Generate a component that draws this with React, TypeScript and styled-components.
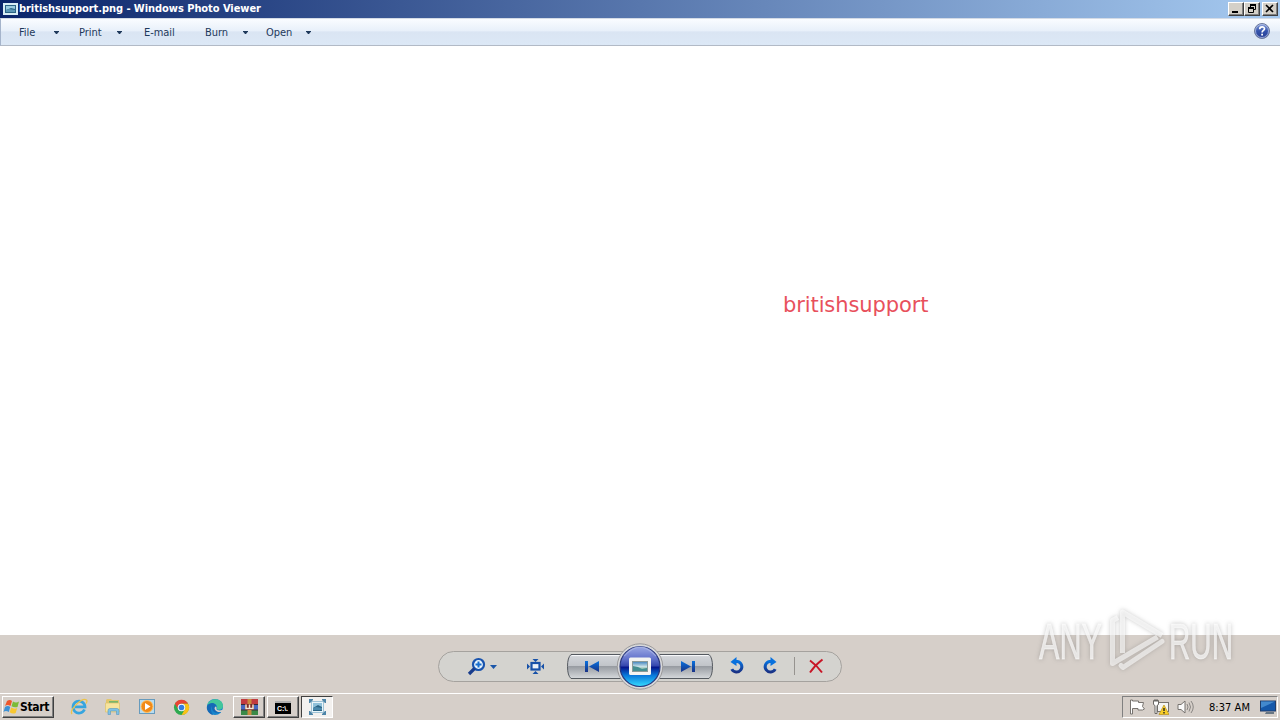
import * as React from 'react';
import styled, { createGlobalStyle, css } from 'styled-components';

const GlobalStyle = createGlobalStyle`
  * {
    box-sizing: border-box;
  }

  body {
    margin: 0;
    overflow: hidden;
    font-family: 'DejaVu Sans Condensed', 'DejaVu Sans', sans-serif;
    font-size: 11px;
    font-stretch: condensed;
  }

  svg {
    display: block;
    flex-shrink: 0;
  }
`
const Desktop = styled.div`
  position: relative;
  width: 1280px;
  height: 720px;
  display: flex;
  flex-direction: column;
  overflow: hidden;
  background: #d6cfc9;
`
const TitleBar = styled.header`
  height: 18px;
  display: flex;
  align-items: center;
  padding: 0 2px 0 3px;
  background: linear-gradient(90deg, #0a246a, #a6caf0);
`
const Title = styled.h1`
  flex: 1;
  margin: 0 0 0 1px;
  color: #fff;
  font-size: 11px;
  line-height: 18px;
  letter-spacing: -0.05px;
  white-space: nowrap;
`
const CaptionButton = styled.button<{ $gap?: boolean }>`
  width: 16px;
  height: 14px;
  margin: 0 0 0 ${props => (props.$gap ? '2px' : '0')};
  padding: 0;
  border: 1px solid;
  border-color: #fff #404040 #404040 #fff;
  box-shadow: inset -1px -1px #808080;
  background: #d4d0c8;
`
const MenuBar = styled.nav`
  height: 28px;
  display: flex;
  align-items: center;
  padding: 0 10px 0 18px;
  border-left: 1px solid #a5b4cb;
  border-top: 1px solid #d4dbe6;
  border-bottom: 1px solid #b2bac6;
  background: linear-gradient(#fafcff, #e8f0fa 45%, #dae5f3 50%, #dce8f6);
`
const MenuItem = styled.div<{ $width: number }>`
  width: ${props => props.$width}px;
  padding-top: 2px;
  color: #1e395b;
  line-height: 14px;
  letter-spacing: -0.05px;
`
const Arrow = styled.i<{ $after: number }>`
  width: 5px;
  height: 3px;
  margin: 1px ${props => props.$after}px 0 0;
  background: #1e395b;
  clip-path: polygon(0 0, 100% 0, 100% 20%, 60% 100%, 40% 100%, 0 20%);
`
const HelpButton = styled.div`
  padding-bottom: 2px;
`
const Spacer = styled.div`
  flex: 1;
`
const Canvas = styled.main`
  height: 589px;
  padding: 245px 0 0 783px;
  background: #fff;
`
const Caption = styled.div`
  color: #e8505c;
  font-family: 'DejaVu Sans', sans-serif;
  font-size: 21px;
  font-stretch: normal;
  line-height: 28px;
  letter-spacing: -0.1px;
`
const ControlBand = styled.section`
  height: 58px;
  display: flex;
  justify-content: center;
  padding-top: 6px;
`
const Taskbar = styled.footer`
  height: 27px;
  display: flex;
  align-items: flex-start;
  padding: 2px 2px 0;
  border-top: 1px solid #fff;
`
const raised = css`
  border: 1px solid;
  border-color: #fff #404040 #404040 #fff;
  box-shadow: inset -1px -1px #808080;
`
const StartButton = styled.button`
  ${raised}
  width: 52px;
  height: 22px;
  display: flex;
  align-items: center;
  margin: 0 9px 0 0;
  padding: 0;
  background: #d6cfc9;
  color: #000;
  font: bold 12px 'DejaVu Sans Condensed', 'DejaVu Sans', sans-serif;
  letter-spacing: -0.3px;
`
const TaskButton = styled.div<{ $look?: 'raised' | 'active' }>`
  width: 32px;
  height: 22px;
  display: flex;
  align-items: center;
  justify-content: center;
  margin-right: 2px;
  ${props => props.$look === 'raised' && raised}
  ${props => props.$look === 'active' && css`
    border: 1px solid;
    border-color: #404040 #fff #fff #404040;
    background: #f3f1ef;
  `}
`
const Tray = styled.div`
  height: 22px;
  width: 156px;
  display: flex;
  align-items: center;
  gap: 8px;
  padding-left: 6px;
  border: 1px solid;
  border-color: #808080 #fff #fff #808080;
`
const Clock = styled.time`
  width: 42px;
  margin: 0 1px 0 7px;
  color: #000;
  letter-spacing: 0.05px;
  white-space: nowrap;
`
const Watermark = styled.svg`
  position: absolute;
  left: 1026px;
  top: 598px;
  overflow: visible;
  filter: drop-shadow(0 0 2px rgba(90, 90, 90, 0.5));
`

const PhotoIcon = () => (
  <svg width="15" height="14" viewBox="0 0 15 14">
    <path d="M0 1h15v12H0z" fill="#d8edf5" />
    <rect x="2" y="3" width="11" height="8" fill="#2b6485" />
    <path d="M3 4h9v3L8 6 3 8z" fill="#9bcbe0" />
    <path d="M3 10V8l3-1 6 1v2z" fill="#5d98b7" />
  </svg>
)

const ViewerTaskIcon = () => (
  <svg width="17" height="16" viewBox="0 0 17 16">
    <path d="M2.500 2.500h12v11h-12z" fill="#e9f5fa" stroke="#9fc3d6" />
    <path d="M0 0h4v1L1 4H0zM17 0h-4v1l3 3h1zM0 16h4v-1l-3-3H0zM17 16h-4v-1l3-3h1z" fill="#4d85a8" />
    <rect x="4" y="4" width="9" height="8" fill="#2b6485" />
    <path d="M4 4h9v4L9 6 4 9z" fill="#8fc1da" />
    <path d="M4 11V9l3-1 6 1v2z" fill="#4b89ac" />
  </svg>
)

const HelpIcon = () => (
  <svg width="16" height="16" viewBox="0 0 16 16">
    <defs>
      <linearGradient id="help" x2="0" y2="1">
        <stop stopColor="#8ea4dd" />
        <stop offset=".5" stopColor="#3453ac" />
        <stop offset="1" stopColor="#263c91" />
      </linearGradient>
    </defs>
    <circle cx="8" cy="8" r="7.5" fill="url(#help)" stroke="#6e7a9b" />
    <circle cx="8" cy="8" r="6.5" fill="none" stroke="#b3c2e8" strokeWidth=".8" />
    <path d="M5.7 6.2c0-3.2 4.8-3 4.8-.4C10.500 7.500 8.100 7.400 8.100 9.500" fill="none" stroke="#fff" strokeWidth="1.700" />
    <rect x="7.200" y="10.700" width="1.800" height="1.800" fill="#fff" />
  </svg>
)

const PlayerControls = () => (
  <svg width="406" height="50" viewBox="437 641 406 50">
    <defs>
      <linearGradient id="steel" x2="0" y2="1">
        <stop stopColor="#e7e9ec" />
        <stop offset=".1" stopColor="#d0d3d7" />
        <stop offset=".47" stopColor="#c1c4c9" />
        <stop offset=".5" stopColor="#989ca2" />
        <stop offset="1" stopColor="#d6d9dc" />
      </linearGradient>
      <linearGradient id="orb" x2="0" y2="1">
        <stop stopColor="#9ca9e4" />
        <stop offset=".3" stopColor="#6474cc" />
        <stop offset=".48" stopColor="#3547ae" />
        <stop offset=".52" stopColor="#06168c" />
        <stop offset=".72" stopColor="#0878db" />
        <stop offset="1" stopColor="#35ddff" />
      </linearGradient>
      <linearGradient id="glyph" x2="0" y2="1">
        <stop stopColor="#0871de" />
        <stop offset="1" stopColor="#193286" />
      </linearGradient>
      <linearGradient id="view" x2="0" y2="1">
        <stop stopColor="#3e81bd" />
        <stop offset=".5" stopColor="#c8e1e7" />
        <stop offset="1" stopColor="#5a9b65" />
      </linearGradient>
    </defs>
    <rect x="438.500" y="651.500" width="403" height="30" rx="15" fill="#d4d3cf" stroke="#a5a29e" />
    <path d="M571 654.500h50v24h-50q-3.500-3-3.500-12t3.500-12zM709 654.500h-50v24h50q3.500-3 3.500-12t-3.500-12z" fill="url(#steel)" stroke="#555a60" />
    <path d="M572 655.500h48M660 655.500h48" stroke="#f7f8fa" />
    <circle cx="640" cy="666.500" r="22.700" fill="#d7d8da" stroke="#9a999a" />
    <circle cx="640" cy="666.500" r="20" fill="url(#orb)" stroke="#29377c" strokeWidth="1.200" />
    <path d="M624 656q16-18 32 0" fill="none" stroke="#bdc8ef" strokeOpacity=".5" strokeWidth="1.500" />
    <rect x="629" y="657.500" width="22" height="17.500" rx="1.500" fill="#f4f4f2" />
    <rect x="632.500" y="661.500" width="15" height="10" fill="url(#view)" stroke="#8a9a99" />
    <path d="M633 666l5 1 4 2 5-1v3h-14z" fill="#438e91" />

    <circle cx="478.500" cy="664.500" r="5.500" fill="#e9f5fc" stroke="#1853ae" strokeWidth="2.200" />
    <path d="M475.500 664.500h6M478.500 661.500v6" stroke="#166dce" strokeWidth="2" />
    <path d="M474.500 668.500l-5.500 5.500" stroke="#183c8c" strokeWidth="3.200" />
    <path d="M490 665h7l-3.500 4z" fill="#1a56a9" />
    <rect x="531.500" y="663" width="8" height="6.500" fill="#eaf1f7" stroke="#1751a8" strokeWidth="2.200" />
    <path d="M532.500 659h6l-3 3zM532.500 674h6l-3-3zM527 663.500v6l3-3zM544 663.500v6l-3-3z" fill="#1751a8" />

    <path d="M585 661h3v11h-3zM599 661v11l-10-5.500zM692 661h3v11h-3zM681 661v11l10-5.500z" fill="url(#glyph)" />
    <path d="M735 661.500h2.500a5.300 5.300 0 1 1-5.700 7.600" fill="none" stroke="url(#glyph)" strokeWidth="3" />
    <path d="M730.500 662l6-5v9z" fill="#0871de" />
    <path d="M772 661.500h-2.500a5.300 5.300 0 1 0 5.700 7.600" fill="none" stroke="url(#glyph)" strokeWidth="3" />
    <path d="M776.500 662l-6-5v9z" fill="#0871de" />
    <path d="M794.500 657v18" stroke="#96938f" />
    <path d="M810 660.500q7 5 12 12M822.500 659.500q-7 5-12.500 13" fill="none" stroke="#c81526" strokeWidth="2" />
  </svg>
)

const WindowsLogo = () => (
  <svg width="17" height="16" viewBox="0 0 17 16">
    <path d="M4 2q3-2 5 0L7.500 7q-3-2-5.500 0z" fill="#ee572c" />
    <path d="M10 2.500q3 2 6 0L14.500 8q-3 1-6-.7z" fill="#7bbb39" />
    <path d="M2 8q3-2 5.200 0L5.800 13q-3-2-5.300 0z" fill="#3d91d5" />
    <path d="M8.200 8.500q3 2 6 .5L12.700 14q-3 1.500-6-.7z" fill="#f8c731" />
  </svg>
)

const ExplorerIcon = () => (
  <svg width="18" height="18" viewBox="0 0 18 18">
    <path d="M14.500 11.500A6 6 0 1 1 15 8.800H5" fill="none" stroke="#36a5df" strokeWidth="2.700" />
    <path d="M2 16C-1 12 12-1 16.500 2c1 1 .5 2-.5 3.500" fill="none" stroke="#ecc34a" strokeWidth="1.300" />
  </svg>
)

const FolderIcon = () => (
  <svg width="18" height="18" viewBox="0 0 18 18">
    <path d="M2 2l1-1h4l1 1h7v11H2z" fill="#e3c76d" />
    <path d="M5 3h9v3H5z" fill="#79b66a" />
    <path d="M1.500 5h14v9h-14z" fill="#f7e49d" stroke="#dbc16d" strokeWidth=".7" />
    <path d="M4 16.500v-4q0-2 2-2h7q2 0 2 2v4h-2.500V13h-6v3.500z" fill="#7fc2e6" stroke="#5797bd" strokeWidth=".6" />
  </svg>
)

const MediaIcon = () => (
  <svg width="18" height="18" viewBox="0 0 18 18">
    <rect x="1.500" y="1.500" width="15" height="14" fill="#b8dcf0" stroke="#679bbd" />
    <circle cx="9" cy="8.500" r="6" fill="#f18a17" stroke="#ffc267" />
    <path d="M7 5v7l5.500-3.500z" fill="#fff" />
  </svg>
)

const ChromeIcon = () => (
  <svg width="17" height="17" viewBox="0 0 18 18">
    <circle cx="9" cy="9" r="8" fill="#2da94f" />
    <path d="M2 5a8 8 0 0 1 14 0H9a4 4 0 0 0-3.500 6z" fill="#e84434" />
    <path d="M16 5a8 8 0 0 1-7 12l3.500-6A4 4 0 0 0 9 5z" fill="#fbc116" />
    <circle cx="9" cy="9" r="4" fill="#fff" />
    <circle cx="9" cy="9" r="3" fill="#347de0" />
  </svg>
)

const EdgeIcon = () => (
  <svg width="18" height="18" viewBox="0 0 18 18">
    <circle cx="9" cy="9" r="8" fill="#1784cb" />
    <path d="M1.200 8C2-1 17-1 17 8c0 5-7 4-6 2 1-5-7-6-9.800-2z" fill="#43c69b" />
    <path d="M1 8c3-5 10-3 9 1 0 1-1 2 0 3 2 2 5 1 6 0 0 0 0 1-1 2-5 2-10 0-9-6-1 1-2 4 1 9C3 16 0 12 1 8z" fill="#1669b6" />
    <path d="M9.500 8.500c2 0 0 3 2 3.500 2 1 5 .3 6-1v3H12C8 12 8 10 9.500 8.500z" fill="#d6cfc9" />
  </svg>
)

const ArchiveIcon = () => (
  <svg width="17" height="17" viewBox="0 0 17 17">
    <rect x="0" width="17" height="5" fill="#c13a40" />
    <rect x="0" y="5" width="17" height="6" fill="#4668c0" />
    <rect x="0" y="11" width="17" height="5" fill="#3a8a48" />
    <path d="M0 5.500h17M0 11h17" stroke="#382b37" />
    <path d="M6.500 0h4v16h-4z" fill="#c98b3e" />
    <path d="M4 5h9v6H4z" fill="#7b2b24" />
    <path d="M5 5.500v4h3.500v-4M8.500 9.500H12v-4" fill="none" stroke="#f4e7d5" strokeWidth="1.500" />
  </svg>
)

const ConsoleIcon = () => (
  <svg width="16" height="13" viewBox="0 0 16 13">
    <path d="M0 0h16v13H0z" fill="#000" />
    <path d="M0 0h16v2H0z" fill="#b0b0b0" />
    <text x="2" y="9.500" fill="#fff" fontSize="7" fontWeight="bold" fontFamily="Liberation Sans" textLength="11">C:\.</text>
  </svg>
)

const FlagIcon = () => (
  <svg width="16" height="16" viewBox="0 0 16 16">
    <path d="M1.500 1v14h2V9.500H9v1.500h4.500l2-1-2-2.500 1-4H9.500V2H3.500V1z" fill="#fff" stroke="#77736f" />
  </svg>
)

const NetworkIcon = () => (
  <svg width="16" height="16" viewBox="0 0 16 16">
    <rect x="4.500" y="3.500" width="11" height="9" fill="#f5f5f3" stroke="#77736f" />
    <path d="M.5 1.500h5v4l-1.500 1v8H2v-8L.5 5.500zM2 0v3M4 0v3" fill="#fff" stroke="#6b6865" />
    <path d="M6 15.500L11 6l5 9.500z" fill="#f8ce27" stroke="#b99118" strokeWidth=".7" />
    <path d="M11 9v3M11 13v1.500" stroke="#222" strokeWidth="1.400" />
  </svg>
)

const SpeakerIcon = () => (
  <svg width="17" height="16" viewBox="0 0 17 16">
    <path d="M1 5.500h3L8 2v12l-4-3.500H1z" fill="#fafafa" stroke="#77736f" />
    <path d="M10 5q2 3 0 6M12 3.500q3 4.500 0 9M14 2q4.500 6 0 12" fill="none" stroke="#898683" />
  </svg>
)

const MonitorIcon = () => (
  <svg width="16" height="15" viewBox="0 0 16 15">
    <rect x=".5" y="1" width="15" height="10" fill="#1558aa" stroke="#213d6a" />
    <path d="M1 1.500h14L1 8z" fill="#4389ce" />
    <path d="M6 12h8v2H5z" fill="#687683" />
  </svg>
)

const AnyRunMark = () => (
  <Watermark width="222" height="86" viewBox="1026 598 222 86">
    <g fill="#fff" fillOpacity=".68" stroke="#fff" strokeOpacity=".5" strokeWidth=".8" fontFamily="'Liberation Sans'" fontSize="50">
      <text transform="translate(1039 658.500) scale(.613 1)">ANY</text>
      <text transform="translate(1169 658.500) scale(.591 1)">RUN</text>
    </g>
    <g fill="none" stroke="#fff" strokeOpacity=".6" strokeWidth="5" strokeLinejoin="round">
      <path d="M1122.500 653v-41l39.500 23.500" />
      <path d="M1118 617.500l-5.500 3v43l45-26.500" />
      <path d="M1162 641.500l-39 26-2-2" strokeLinecap="round" />
    </g>
  </Watermark>
)

const App: React.FunctionComponent = () => (
  <Desktop>
    <GlobalStyle />
    <TitleBar>
      <PhotoIcon />
      <Title>britishsupport.png - Windows Photo Viewer</Title>
      <CaptionButton>
        <svg width="14" height="12"><path d="M3 8h6v2H3z" /></svg>
      </CaptionButton>
      <CaptionButton>
        <svg width="14" height="12">
          <path d="M5 1.500h6M5.500 1v3M10.500 1v5.500H9M3 4.500h6M3.500 4v5.500h5V4" fill="none" stroke="#000" />
          <path d="M5 1h6v2H5zM3 4h6v2H3z" />
        </svg>
      </CaptionButton>
      <CaptionButton $gap>
        <svg width="14" height="12"><path d="M3 2l7 7M10 2L3 9" stroke="#000" strokeWidth="1.600" /></svg>
      </CaptionButton>
    </TitleBar>
    <MenuBar>
      <MenuItem $width={35}>File</MenuItem>
      <Arrow $after={20} />
      <MenuItem $width={38}>Print</MenuItem>
      <Arrow $after={22} />
      <MenuItem $width={61}>E-mail</MenuItem>
      <MenuItem $width={38}>Burn</MenuItem>
      <Arrow $after={18} />
      <MenuItem $width={40}>Open</MenuItem>
      <Arrow $after={0} />
      <Spacer />
      <HelpButton><HelpIcon /></HelpButton>
    </MenuBar>
    <Canvas>
      <Caption>britishsupport</Caption>
    </Canvas>
    <ControlBand>
      <PlayerControls />
    </ControlBand>
    <Taskbar>
      <StartButton><WindowsLogo />Start</StartButton>
      <TaskButton><ExplorerIcon /></TaskButton>
      <TaskButton><FolderIcon /></TaskButton>
      <TaskButton><MediaIcon /></TaskButton>
      <TaskButton><ChromeIcon /></TaskButton>
      <TaskButton><EdgeIcon /></TaskButton>
      <TaskButton $look="raised"><ArchiveIcon /></TaskButton>
      <TaskButton $look="raised"><ConsoleIcon /></TaskButton>
      <TaskButton $look="active"><ViewerTaskIcon /></TaskButton>
      <Spacer />
      <Tray>
        <FlagIcon />
        <NetworkIcon />
        <SpeakerIcon />
        <Clock>8:37 AM</Clock>
        <MonitorIcon />
      </Tray>
    </Taskbar>
    <AnyRunMark />
  </Desktop>
)

export default App;
